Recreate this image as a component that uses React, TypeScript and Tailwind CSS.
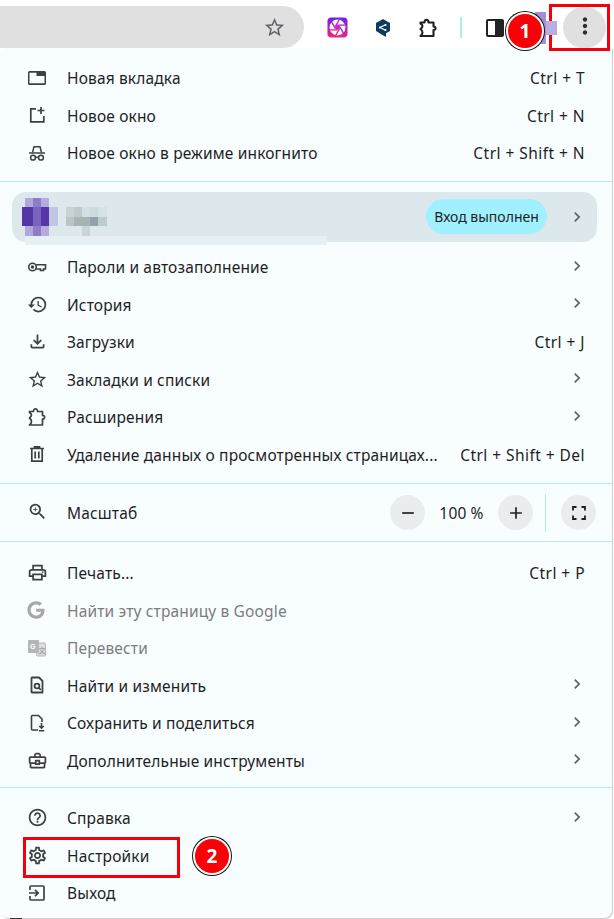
import React from "react";
import {
  MdHistory, MdOutlineFileDownload, MdStarBorder, MdOutlineZoomIn, MdOutlinePrint,
  MdOutlineBusinessCenter, MdHelpOutline, MdOutlineSettings, MdChevronRight, MdRemove, MdAdd, MdMoreVert,
} from "react-icons/md";
import { FaGoogle } from "react-icons/fa";

const ic = "#3c4043";

const Ext = ({ w = 1.7 }: { w?: number }) => (
  <svg width="20" height="20" viewBox="0 0 20 20" fill="none" stroke="currentColor" strokeWidth={w} strokeLinejoin="round">
    <path d="M2.5 4.5h4c-.3-3.600 4.300-3.600 4 0h5v4c2.800-.3 2.800 3.800 0 3.500v6H2.500c1.600-1.300 2-2.500 2-3.500s-.4-2.200-2-3.500c1.600-1.300 2-2 2-3s-.4-1.500-2-2.500z" />
  </svg>
);
const NewTab = () => (
  <svg width="20" height="20" viewBox="0 0 20 20"><path fill={ic} d="M2.500 3h15A1.500 1.500 0 0 1 19 4.500v11a1.500 1.500 0 0 1-1.500 1.500h-15A1.500 1.500 0 0 1 1 15.500v-11A1.500 1.500 0 0 1 2.500 3zm0 1.700v10.600h15V8h-8V4.700z" /></svg>
);
const NewWin = () => (
  <svg width="20" height="20" viewBox="0 0 20 20" fill="none" stroke={ic} strokeWidth="1.7"><path d="M9 3.800H3.800v13h13V11" /><path d="M14 2v7M10.500 5.500h7" /></svg>
);
const Incog = () => (
  <svg width="20" height="20" viewBox="0 0 20 20" fill="none" stroke={ic} strokeWidth="1.5"><path d="M2 10h16" /><path d="M5.500 9.500L7 3.800h6l1.500 5.700" /><circle cx="6" cy="14.700" r="2.400" /><circle cx="14" cy="14.700" r="2.400" /><path d="M8.300 14.300h3.400" /></svg>
);
const KeyI = () => (
  <svg width="20" height="20" viewBox="0 0 20 20" fill="none" stroke={ic} strokeWidth="1.6"><circle cx="5.500" cy="10" r="3.800" /><circle cx="5.500" cy="10" r="0.900" fill={ic} /><path d="M9.200 7.700h9.300V12h-2v1.500h-3V12H9.200" /></svg>
);
const Trash = () => (
  <svg width="20" height="20" viewBox="0 0 20 20" fill="none" stroke={ic} strokeWidth="1.7"><path d="M3 4.500h14M7.500 4.500V2.800h5v1.700" /><path d="M4.800 4.500v12.700h10.400V4.500" /><path d="M8.200 7.500v7M11.800 7.500v7" /></svg>
);
const Puzzle = () => <span style={{ color: ic }} className="flex"><Ext /></span>;
const GI = () => <FaGoogle size={18} color="#a8a8a8" />;
const Tr = () => (
  <svg width="20" height="20" viewBox="0 0 20 20"><path d="M7 5H17.500a1 1 0 0 1 1 1v11a1 1 0 0 1-1 1H10z" fill="#dcdee0" stroke="#b4b6b8" /><rect x="1" y="2" width="11" height="13" rx="1" fill="#b4b6b8" /><text x="3" y="11" fontSize="7" fontWeight="700" fill="#fff" fontFamily="Liberation Sans, sans-serif">G</text><text x="11.500" y="15" fontSize="7" fill="#8a8c8e" fontFamily="Noto Sans CJK SC, sans-serif">文</text></svg>
);
const FindI = () => (
  <svg width="20" height="20" viewBox="0 0 20 20" fill="none" stroke={ic} strokeWidth="1.8"><path d="M5 2.500h7l3.500 3.500v11.500H5a.5.5 0 0 1-.5-.5V3a.5.5 0 0 1 .5-.5z" strokeLinejoin="round" /><circle cx="10" cy="11" r="2.400" /><path d="M11.800 12.800l2 2" /></svg>
);
const SaveI = () => (
  <svg width="20" height="20" viewBox="0 0 20 20" fill="none" stroke={ic} strokeWidth="1.600"><path d="M11 17H5.500a1 1 0 0 1-1-1V3.500a1 1 0 0 1 1-1h6L15 6v3" strokeLinejoin="round" /><path d="M14.500 10v5M12.300 13l2.200 2.200 2.200-2.200M11.800 17.800h5.400" /></svg>
);
const ExitI = () => (
  <svg width="20" height="20" viewBox="0 0 20 20" fill="none" stroke={ic} strokeWidth="1.700"><path d="M3 7V4a1 1 0 0 1 1-1h12a1 1 0 0 1 1 1v12a1 1 0 0 1-1 1H4a1 1 0 0 1-1-1v-3" /><path d="M2 10h9M8 6.800L11.200 10 8 13.200" /></svg>
);

type RowP = { icon: React.ReactNode; label: string; hint?: string; arrow?: boolean; muted?: boolean };
const Row = ({ icon, label, hint, arrow, muted }: RowP) => (
  <div className="flex h-[37.5px] items-center pr-[24px]">
    <div className="mt-[-2px] flex w-[67px] shrink-0 justify-start pl-[27px]">{icon}</div>
    <span className={muted ? "flex-1 text-[#7b7d80]" : "flex-1 text-[#1f1f1f]"}>{label}</span>
    {hint && <span className="pr-[3px] tracking-[0.45px] text-[#1f1f1f]">{hint}</span>}
    {arrow && <MdChevronRight size={20} color="#5f6368" className="mr-[1px] mt-[-4px]" />}
  </div>
);
const Hr = () => <div className="h-px bg-[#b0eaf8]" />;
const mi = { size: 21, color: ic };

const Avatar = () => (
  <svg width="36" height="38" viewBox="0 0 36 38" shapeRendering="crispEdges">
    <rect x="3" y="0" width="8" height="9" fill="#b0a8d9" /><rect x="11" y="0" width="8" height="9" fill="#8f7cc9" /><rect x="19" y="0" width="8" height="9" fill="#b4acdc" />
    <rect x="0" y="9" width="3" height="19" fill="#5535a8" /><rect x="3" y="9" width="8" height="19" fill="#5535a8" /><rect x="11" y="9" width="8" height="19" fill="#7a62bf" /><rect x="19" y="9" width="8" height="19" fill="#5535a8" /><rect x="27" y="9" width="9" height="19" fill="#c0c6e4" />
    <rect x="3" y="28" width="8" height="10" fill="#b0a8d9" /><rect x="11" y="28" width="8" height="10" fill="#8f7cc9" /><rect x="19" y="28" width="8" height="10" fill="#b4acdc" />
  </svg>
);
const Mosaic = () => (
  <svg width="41" height="29" viewBox="0 0 41 29" shapeRendering="crispEdges">
    <rect x="0" y="0" width="8" height="10" fill="#c7d2d4" /><rect x="8" y="0" width="8" height="10" fill="#bdcacb" /><rect x="16" y="0" width="8" height="10" fill="#d2e0e6" /><rect x="24" y="0" width="8" height="10" fill="#ccdade" /><rect x="32" y="0" width="9" height="10" fill="#d5e2e6" />
    <rect x="0" y="10" width="8" height="9" fill="#b9c5c6" /><rect x="8" y="10" width="8" height="9" fill="#a8b4b4" /><rect x="16" y="10" width="8" height="9" fill="#a8b4b4" /><rect x="24" y="10" width="8" height="9" fill="#93a1a8" /><rect x="32" y="10" width="9" height="9" fill="#bccbd0" />
    <rect x="16" y="19" width="8" height="10" fill="#c8d6d9" />
  </svg>
);

const Badge = ({ n, cls }: { n: string; cls: string }) => (
  <div className={"absolute flex h-[38px] w-[38px] items-center justify-center rounded-full border-2 border-[#fff] bg-[#fb0006] text-[19px] font-bold text-white shadow-[0_0_0_1px_#111] " + cls}>{n}</div>
);

export default function App() {
  return (
    <div className="relative h-[919px] w-[614px] overflow-hidden bg-white text-[15.5px] leading-none tracking-[0.15px]" style={{ fontFamily: '"Noto Sans", sans-serif' }}>
      <header className="flex h-[48px] items-start">
        <div className="mt-[6px] flex h-[42px] w-[304px] shrink-0 items-center justify-end rounded-r-[21px] bg-[#e0e0e0] pr-[18px]">
          <MdStarBorder size={23} color="#5f6368" />
        </div>
        <div className="ml-[23px] mt-[17px] flex h-[21px] items-center">
          <svg width="21" height="21" viewBox="0 0 22 22">
            <defs><linearGradient id="g" x1="0" y1="0" x2="0" y2="1"><stop offset="0" stopColor="#6d22f0" /><stop offset="1" stopColor="#f0247a" /></linearGradient></defs>
            <rect x="0.500" y="0.500" width="21" height="21" rx="4" fill="url(#g)" />
            <circle cx="11" cy="11" r="8.300" fill="#fff" />
            <circle cx="11" cy="11" r="2.500" fill="#d92a9a" />
            {[0, 60, 120, 180, 240, 300].map((a) => (
              <path key={a} d="M11 8.500H19.500" stroke={a > 60 && a < 240 ? "#e8268c" : "#a82ad0"} strokeWidth="1.400" transform={`rotate(${a} 11 11)`} />
            ))}
          </svg>
          <svg width="16" height="18" viewBox="0 0 16 18" className="ml-[27px]">
            <path d="M8 0l7 4v8l-4 2.300V18l-4-2.300L1 12V4z" fill="#123a5c" />
            <path d="M5 8.500l5-2.500M5 8.500l5 2.500" stroke="#fff" strokeWidth="1.100" fill="none" />
            <circle cx="5" cy="8.500" r="1.100" fill="#fff" /><circle cx="10.500" cy="6" r="1.100" fill="#fff" /><circle cx="10.500" cy="11" r="1.100" fill="#fff" />
          </svg>
          <span className="ml-[27px] flex text-[#222]"><Ext w={2.1} /></span>
          <div className="ml-[22px] h-[21px] w-[1.5px] bg-[#b0eaf8]" />
          <div className="ml-[24px] flex h-[18px] w-[18px] overflow-hidden rounded-[2px] border-2 border-[#222]"><div className="w-[7px] bg-white" /><div className="flex-1 bg-[#222]" /></div>
        </div>
        <div className="ml-auto mr-[8px] mt-[7px] flex h-[41px] w-[43px] items-center justify-center rounded-full bg-[#e0e0e0]">
          <MdMoreVert size={26} color="#2e2e2e" className="mt-[-3px]" />
        </div>
      </header>

      <main className="h-[870px] w-[612px] rounded-b-[8px] rounded-tl-[8px] bg-[#f8fdff] shadow-[1px_1px_0_#cfcfcf]">
        <section className="pb-[8.5px] pt-[12px]">
          <Row icon={<NewTab />} label="Новая вкладка" hint="Ctrl + T" />
          <Row icon={<NewWin />} label="Новое окно" hint="Ctrl + N" />
          <Row icon={<Incog />} label="Новое окно в режиме инкогнито" hint="Ctrl + Shift + N" />
        </section>
        <Hr />
        <section className="pb-[9px] pt-[10px]">
          <div className="ml-[12px] mr-[15px] flex h-[50px] items-start rounded-[14px] bg-[#dce8ec]">
            <div className="ml-[10px] mt-[6px] flex"><Avatar /></div>
            <div className="ml-[8px] mt-[15px] flex"><Mosaic /></div>
            <div className="ml-auto mt-[7px] flex h-[35px] w-[121px] items-center justify-center rounded-full bg-[#a0f0ff] text-[14px] tracking-normal text-[#1f1f1f]">Вход выполнен</div>
            <MdChevronRight size={20} color="#5f6368" className="ml-[20px] mr-[10px] mt-[15px]" />
          </div>
          <div className="relative mb-[4px] ml-[25px] mt-[-6px] h-[9px] w-[302px] bg-[#e6f0f4]" />
          <Row icon={<KeyI />} label="Пароли и автозаполнение" arrow />
          <Row icon={<MdHistory {...mi} />} label="История" arrow />
          <Row icon={<MdOutlineFileDownload {...mi} />} label="Загрузки" hint="Ctrl + J" />
          <Row icon={<MdStarBorder {...mi} />} label="Закладки и списки" arrow />
          <Row icon={<Puzzle />} label="Расширения" arrow />
          <Row icon={<Trash />} label="Удаление данных о просмотренных страницах..." hint="Ctrl + Shift + Del" />
        </section>
        <Hr />
        <section className="flex h-[57px] items-center pr-[16px]">
          <div className="mt-[-2px] flex w-[67px] shrink-0 pl-[27px]"><MdOutlineZoomIn {...mi} /></div>
          <span className="mt-[2px] flex-1 text-[#1f1f1f]">Масштаб</span>
          <div className="flex h-[35px] w-[35px] items-center justify-center rounded-full bg-[#e9edf0]"><MdRemove size={20} color="#1f1f1f" /></div>
          <span className="mt-[2px] w-[73px] text-center text-[#1f1f1f]">100 %</span>
          <div className="flex h-[35px] w-[35px] items-center justify-center rounded-full bg-[#e9edf0]"><MdAdd size={20} color="#1f1f1f" /></div>
          <div className="ml-[12px] h-[38px] w-px bg-[#b0eaf8]" />
          <div className="ml-[15px] flex h-[35px] w-[35px] items-center justify-center rounded-full bg-[#e9edf0]">
            <svg width="14" height="14" viewBox="0 0 14 14" fill="none" stroke="#1f1f1f" strokeWidth="1.800"><path d="M1 4.500V1h3.500M9.500 1H13v3.500M13 9.500V13H9.500M4.500 13H1V9.500" /></svg>
          </div>
        </section>
        <Hr />
        <section className="pb-[7px] pt-[13px]">
          <Row icon={<MdOutlinePrint {...mi} />} label="Печать..." hint="Ctrl + P" />
          <Row icon={<GI />} label="Найти эту страницу в Google" muted />
          <Row icon={<Tr />} label="Перевести" muted />
          <Row icon={<FindI />} label="Найти и изменить" arrow />
          <Row icon={<SaveI />} label="Сохранить и поделиться" arrow />
          <Row icon={<MdOutlineBusinessCenter {...mi} />} label="Дополнительные инструменты" arrow />
        </section>
        <Hr />
        <section className="pt-[12px]">
          <Row icon={<MdHelpOutline {...mi} />} label="Справка" arrow />
          <Row icon={<MdOutlineSettings {...mi} />} label="Настройки" />
          <Row icon={<ExitI />} label="Выход" />
        </section>
      </main>

      <div className="absolute left-[10px] top-[918px] h-px w-[12px] bg-[#333]" />
      <div className="absolute left-[549px] top-[4px] h-[47px] w-[61px] border-[3px] border-[#f5000a]" />
      <div className="absolute left-[23px] top-[837px] h-[41px] w-[157px] border-[3px] border-[#f5000a]" />
      <svg className="absolute left-[535px] top-[12px]" width="22" height="32" viewBox="0 0 22 32" shapeRendering="crispEdges">
        <rect x="0" y="0" width="11" height="32" fill="#a090d8" /><rect x="11" y="9" width="11" height="14" fill="#b8aee2" />
      </svg>
      <Badge n="1" cls="left-[506px] top-[12px]" />
      <Badge n="2" cls="left-[193px] top-[837px]" />
    </div>
  );
}
